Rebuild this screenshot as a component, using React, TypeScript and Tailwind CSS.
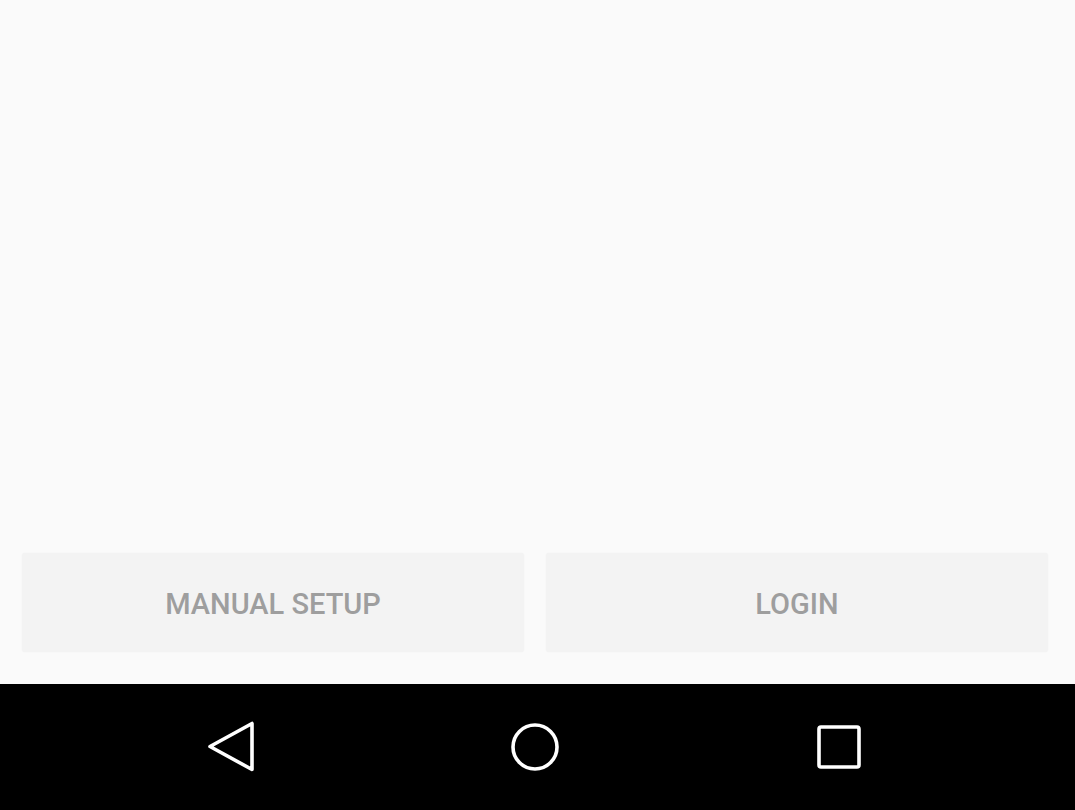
export default function App() {
  return (
    <div className="flex flex-col w-full h-screen bg-[#fafafa] font-['Roboto',sans-serif]">
      <div className="flex-1" />
      <div className="flex gap-[22px] pl-[22px] pr-[27px] pb-[32px]">
        <button
          type="button"
          className="flex-1 h-[99px] pt-[5px] rounded-[3px] bg-[#f3f3f3] text-[#9e9e9e] text-[29px] font-medium shadow-[0_0_2px_rgba(0,0,0,0.04)]"
        >
          MANUAL SETUP
        </button>
        <button
          type="button"
          className="flex-1 h-[99px] pt-[5px] rounded-[3px] bg-[#f3f3f3] text-[#9e9e9e] text-[29px] font-medium shadow-[0_0_2px_rgba(0,0,0,0.04)]"
        >
          LOGIN
        </button>
      </div>
      <nav className="h-[126px] bg-black flex items-center justify-center gap-[244px] pr-[5px]">
        <svg width="60" height="60" viewBox="0 0 60 60" fill="none">
          <path
            d="M51 6.5 L51 52.5 L9 29.5 Z"
            stroke="#fff"
            strokeWidth="3.6"
            strokeLinejoin="round"
          />
        </svg>
        <svg width="60" height="60" viewBox="0 0 60 60" fill="none">
          <circle cx="30" cy="30" r="22" stroke="#fff" strokeWidth="3.6" />
        </svg>
        <svg width="60" height="60" viewBox="0 0 60 60" fill="none">
          <rect x="10" y="10" width="40" height="40" rx="2" stroke="#fff" strokeWidth="3.6" />
        </svg>
      </nav>
    </div>
  );
}
